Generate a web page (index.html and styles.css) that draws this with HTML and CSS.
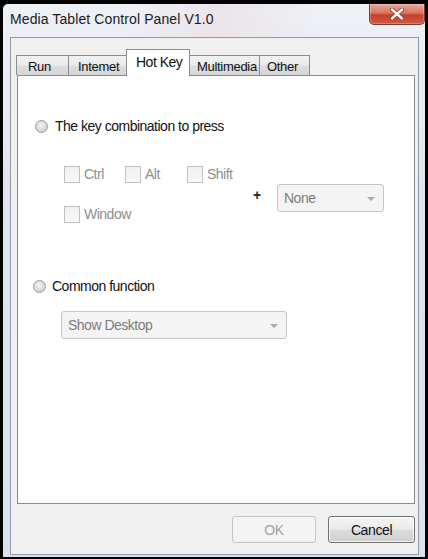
FILE: index.html
```html
<!DOCTYPE html>
<html>
<head>
<meta charset="utf-8">
<link rel="stylesheet" href="styles.css">
</head>
<body>
<div class="window">
  <div class="titlebar">
    <span class="title">Media Tablet Control Panel V1.0</span>
    <div class="close">
      <svg width="16" height="12" viewBox="0 0 16 12">
        <path d="M3 1.5 L13 10.5 M13 1.5 L3 10.5" stroke="#7a3a30" stroke-width="4" stroke-linecap="round"/>
        <path d="M3 1.5 L13 10.5 M13 1.5 L3 10.5" stroke="#ffffff" stroke-width="2.4" stroke-linecap="round"/>
      </svg>
    </div>
  </div>
  <div class="client">
    <div class="tabs">
      <div class="tab t-run">Run</div>
      <div class="tab t-int">Intemet</div>
      <div class="tab active t-hot">Hot Key</div>
      <div class="tab t-mm">Multimedia</div>
      <div class="tab t-oth">Other</div>
    </div>
    <div class="panel">
      <div class="radio-row r1">
        <span class="radio"></span>
        <span class="label">The key combination to press</span>
      </div>
      <div class="keys">
        <div class="checks">
          <div class="check"><span class="box"></span><span class="clabel">Ctrl</span></div>
          <div class="check"><span class="box"></span><span class="clabel">Alt</span></div>
          <div class="check"><span class="box"></span><span class="clabel">Shift</span></div>
          <div class="check"><span class="box"></span><span class="clabel">Window</span></div>
        </div>
        <div class="plus">+</div>
        <div class="combo c-none"><span>None</span><i class="arrow"></i></div>
      </div>
      <div class="radio-row r2">
        <span class="radio"></span>
        <span class="label">Common function</span>
      </div>
      <div class="combo c-func"><span>Show Desktop</span><i class="arrow"></i></div>
    </div>
    <div class="buttons">
      <div class="btn ok">OK</div>
      <div class="btn cancel">Cancel</div>
    </div>
  </div>
</div>
</body>
</html>
```
FILE: styles.css
```css
* { box-sizing: border-box; }
html, body { margin: 0; }
body {
  width: 428px;
  height: 559px;
  background: #000;
  padding: 4px 3px 2px 3px;
  font-family: "Liberation Sans", Arial, sans-serif;
  overflow: hidden;
}
.window {
  height: 553px;
  display: flex;
  flex-direction: column;
  padding: 0 6px 2px 7px;
  background: linear-gradient(180deg, #eef1f6 0%, #e4e6ee 30%, #dde3ec 60%, #d9e2ec 100%);
  border-radius: 5px 5px 0 0;
}
.titlebar {
  height: 33px;
  display: flex;
  align-items: flex-start;
  background: linear-gradient(100deg, rgba(255,255,255,0) 30%, rgba(236,222,230,0.7) 50%, rgba(255,255,255,0) 75%);
}
.title {
  margin-top: 7px;
  font-size: 14px;
  color: #1a1a1a;
  letter-spacing: 0.1px;
}
.close {
  margin-left: auto;
  margin-right: -6px;
  width: 56px;
  height: 21px;
  border: 1px solid #7d3a33;
  border-top: none;
  border-radius: 0 0 5px 5px;
  background: linear-gradient(180deg, #e9a99c 0%, #d9735f 45%, #c4412b 55%, #cf5a3f 100%);
  display: flex;
  align-items: center;
  justify-content: center;
  box-shadow: inset 0 0 0 1px rgba(255,255,255,0.25);
}
.close svg { display: block; margin-top: -1px; }
.client {
  flex: 1;
  background: #f0f0f0;
  border: 1px solid #8d9aab;
  padding: 11px 3px 0 5px;
  display: flex;
  flex-direction: column;
}
.tabs {
  display: flex;
  align-items: flex-end;
  height: 26px;
  position: relative;
  z-index: 1;
}
.tab {
  height: 20px;
  border: 1px solid #898c95;
  border-bottom: none;
  margin-right: -1px;
  background: linear-gradient(180deg, #f2f2f2 0%, #ebebeb 45%, #dddddd 55%, #d6d6d6 100%);
  font-size: 13px;
  letter-spacing: -0.3px;
  color: #111;
  padding-left: 9px;
  line-height: 19px;
  padding-top: 1px;
  white-space: nowrap;
}
.t-run { width: 53px; padding-left: 11px; }
.t-int { width: 59px; }
.t-hot { width: 64px; }
.t-mm { width: 71px; padding-left: 7px; }
.t-oth { width: 51px; padding-left: 7px; }
.tab.active {
  height: 27px;
  margin-bottom: -1px;
  background: #fff;
  padding-left: 9px;
  padding-top: 3px;
  font-size: 14px;
  letter-spacing: -0.5px;
  line-height: 18px;
}
.panel {
  height: 429px;
  margin-left: 1px;
  background: #fff;
  border: 1px solid #898c95;
  font-size: 14px;
  letter-spacing: -0.5px;
}
.radio-row {
  display: flex;
  align-items: center;
  height: 16px;
  color: #111;
}
.r1 { margin-top: 42px; padding-left: 17px; gap: 7px; }
.r2 { margin-top: 56px; padding-left: 15px; gap: 6px; }
.radio {
  width: 13px;
  height: 13px;
  border-radius: 50%;
  border: 1px solid #9a9a9a;
  background: radial-gradient(circle at 45% 40%, #f6f6f6 0%, #dadada 55%, #c2c2c2 100%);
  flex: none;
}
.keys {
  display: flex;
  align-items: flex-start;
  margin-top: 32px;
  padding-left: 46px;
}
.checks {
  display: grid;
  grid-template-columns: 61px 62px 66px;
  row-gap: 24px;
}
.check {
  display: flex;
  align-items: center;
  height: 16px;
  gap: 4px;
  color: #8e8e8e;
}
.box {
  width: 16px;
  height: 17px;
  border: 1px solid #c2c2c2;
  background: linear-gradient(180deg, #f1f1f1, #f8f8f8);
  flex: none;
}
.plus {
  width: 24px;
  margin-top: 21px;
  font-size: 14px;
  color: #222;
  font-weight: bold;
}
.combo {
  height: 28px;
  border: 1px solid #c6c6c6;
  border-radius: 3px;
  background: #f4f4f4;
  color: #7c7c7c;
  display: flex;
  align-items: center;
  padding-left: 6px;
  position: relative;
}
.c-none { width: 107px; margin-top: 18px; }
.c-func { width: 226px; margin-top: 17px; margin-left: 43px; }
.arrow {
  position: absolute;
  right: 8px;
  top: 12px;
  width: 0;
  height: 0;
  border-left: 4px solid transparent;
  border-right: 4px solid transparent;
  border-top: 4px solid #a8a8a8;
}
.buttons {
  display: flex;
  justify-content: flex-end;
  gap: 12px;
  margin-top: 12px;
  font-size: 14px;
  letter-spacing: -0.4px;
}
.btn {
  height: 27px;
  border-radius: 3px;
  display: flex;
  align-items: center;
  justify-content: center;
}
.ok {
  width: 84px;
  border: 1px solid #c2c5c8;
  background: #f4f4f4;
  color: #a3a3a3;
}
.cancel {
  width: 87px;
  border: 1px solid #707070;
  background: linear-gradient(180deg, #f4f4f4 0%, #ebebeb 48%, #dddddd 52%, #cfcfcf 100%);
  color: #111;
  box-shadow: inset 0 0 0 1px rgba(255,255,255,0.8);
}
```
